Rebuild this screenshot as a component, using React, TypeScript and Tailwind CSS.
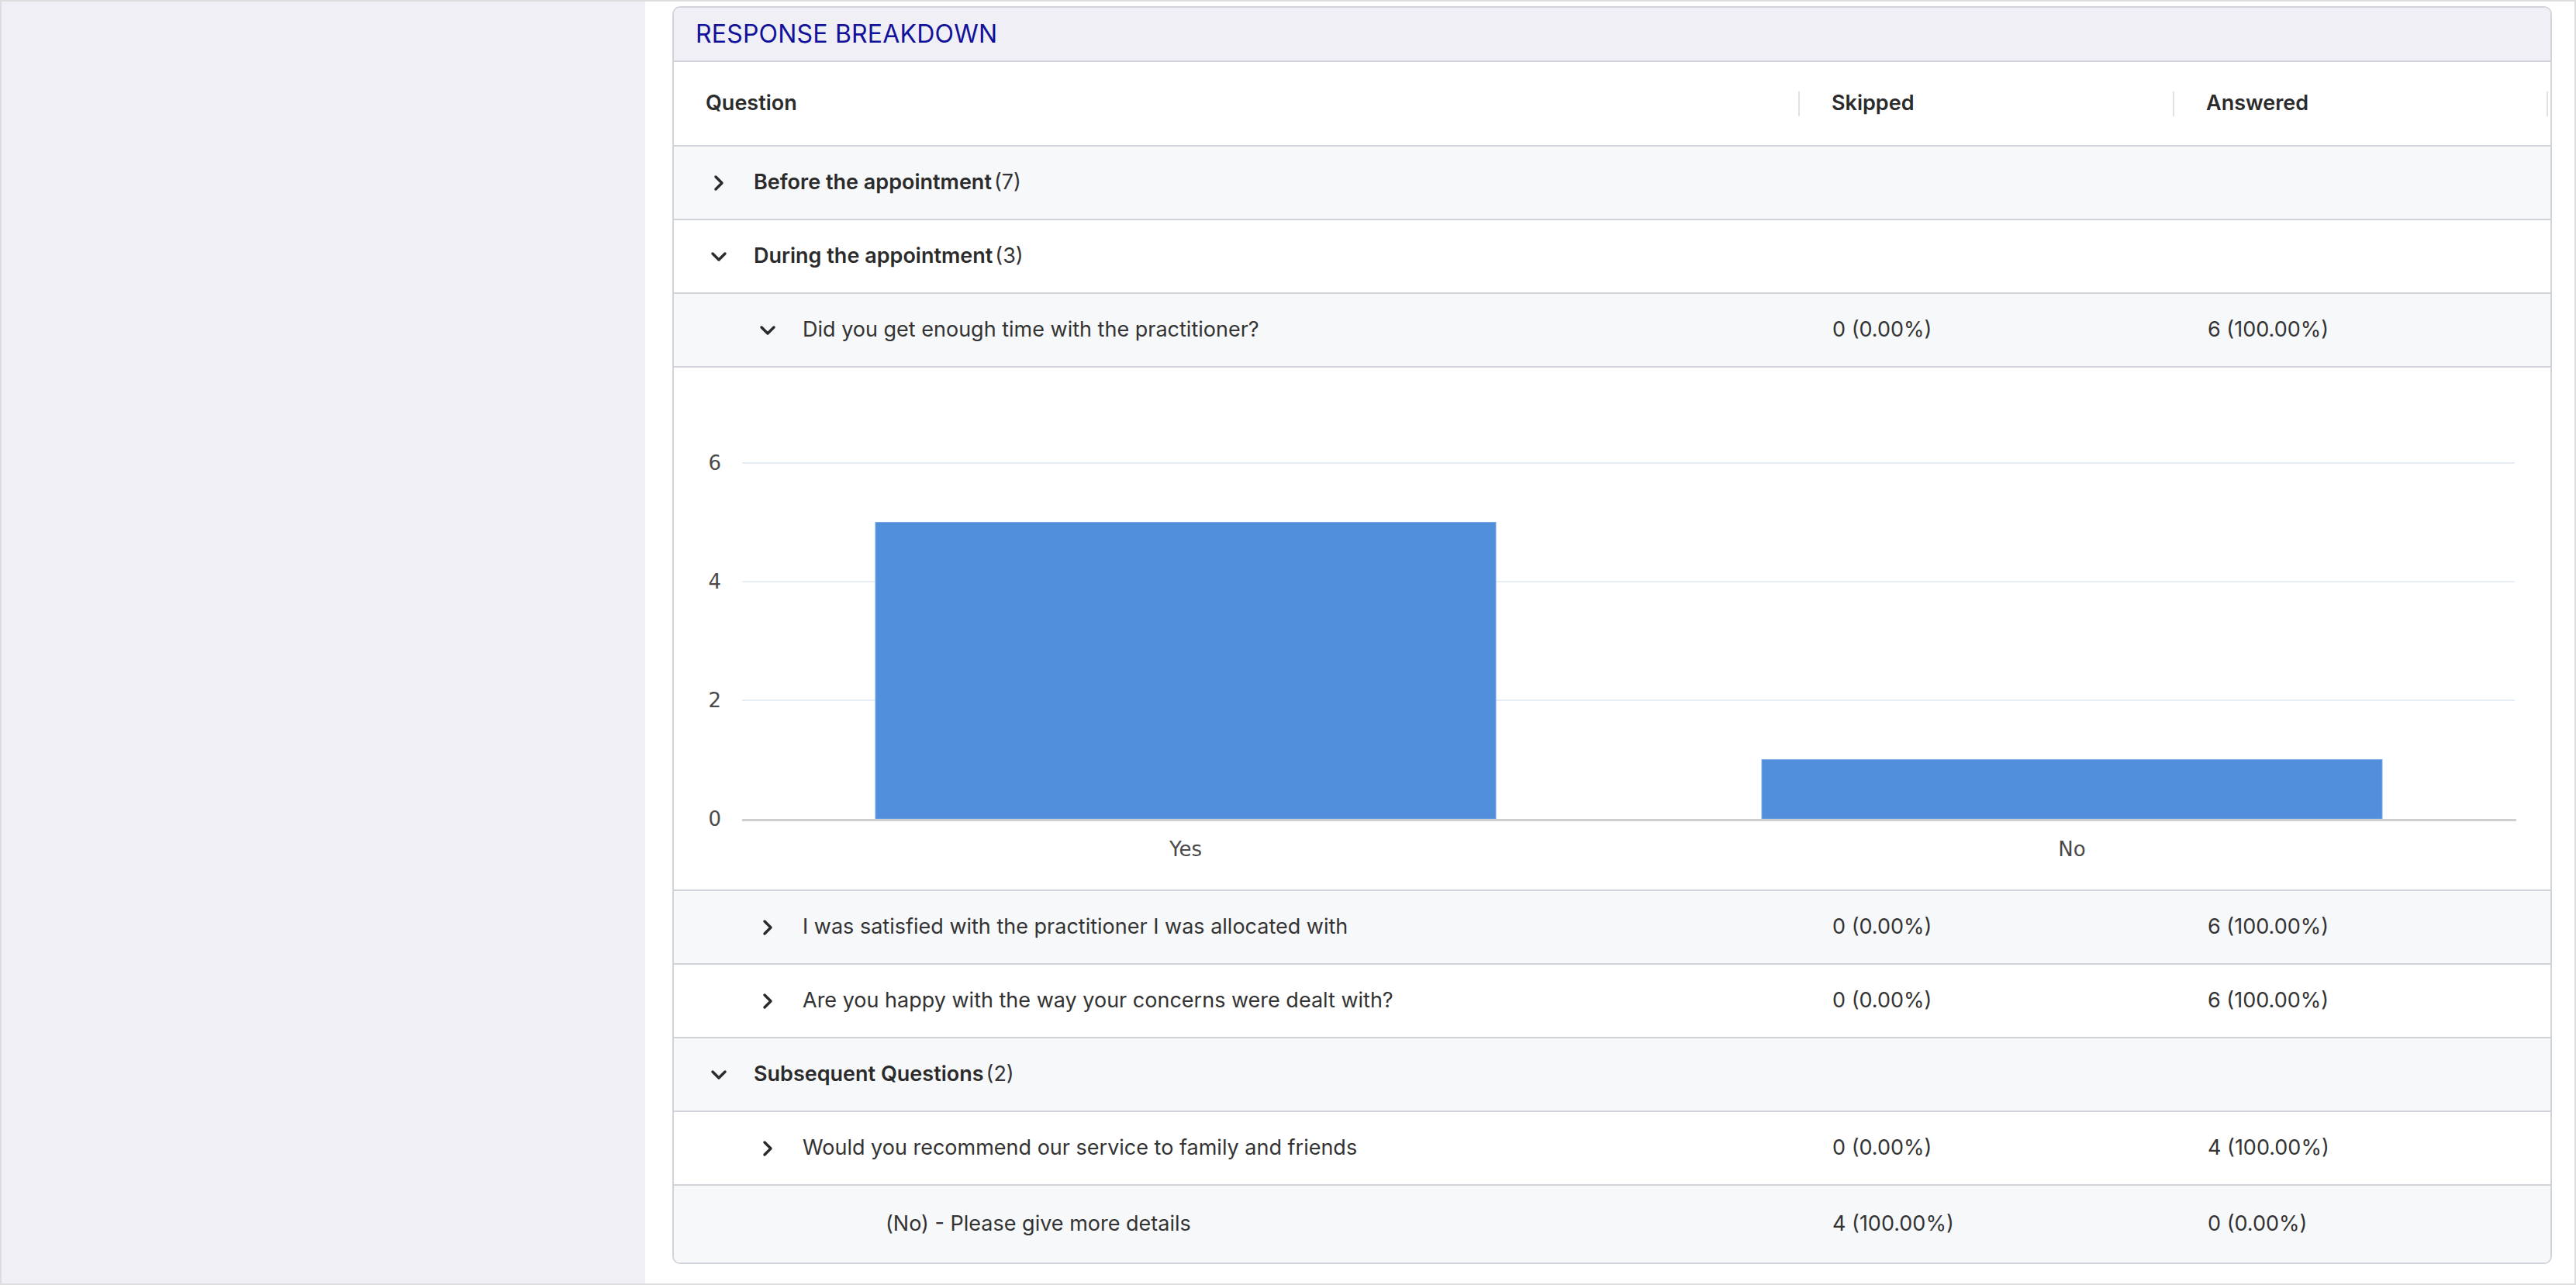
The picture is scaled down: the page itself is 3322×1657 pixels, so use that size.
import { ChevronDown, ChevronRight } from "lucide-react";

type Row = {
  label: string;
  count?: number;
  level: "group" | "question" | "detail";
  open?: boolean;
  skipped?: string;
  answered?: string;
  shaded: boolean;
  chart?: boolean;
  tall?: boolean;
};

const rows: Row[] = [
  { label: "Before the appointment", count: 7, level: "group", shaded: true },
  { label: "During the appointment", count: 3, level: "group", open: true, shaded: false },
  {
    label: "Did you get enough time with the practitioner?",
    level: "question",
    open: true,
    skipped: "0 (0.00%)",
    answered: "6 (100.00%)",
    shaded: true,
    chart: true,
  },
  {
    label: "I was satisfied with the practitioner I was allocated with",
    level: "question",
    skipped: "0 (0.00%)",
    answered: "6 (100.00%)",
    shaded: true,
  },
  {
    label: "Are you happy with the way your concerns were dealt with?",
    level: "question",
    skipped: "0 (0.00%)",
    answered: "6 (100.00%)",
    shaded: false,
  },
  { label: "Subsequent Questions", count: 2, level: "group", open: true, shaded: true },
  {
    label: "Would you recommend our service to family and friends",
    level: "question",
    skipped: "0 (0.00%)",
    answered: "4 (100.00%)",
    shaded: false,
  },
  {
    label: "(No) - Please give more details",
    level: "detail",
    skipped: "4 (100.00%)",
    answered: "0 (0.00%)",
    shaded: true,
    tall: true,
  },
];

const bars = [
  { label: "Yes", value: 5, x: 260 },
  { label: "No", value: 1, x: 1403 },
];

function BarChart() {
  const base = 582;
  const unit = 76.5;
  return (
    <svg viewBox="0 0 2420 673" className="block w-[2420px] h-[673px]">
      {[2, 4, 6].map((t) => (
        <line
          key={t}
          x1={88}
          x2={2374}
          y1={base - t * unit}
          y2={base - t * unit}
          stroke="#e6edf6"
          strokeWidth={2}
        />
      ))}
      {bars.map((b) => (
        <rect
          key={b.label}
          x={b.x}
          y={base - b.value * unit}
          width={800}
          height={b.value * unit}
          fill="#518fdd"
          stroke="#79a9e6"
          strokeWidth={1}
        />
      ))}
      <line x1={88} x2={2376} y1={base + 1.5} y2={base + 1.5} stroke="#cfcfcf" strokeWidth={3} />
      {[0, 2, 4, 6].map((t) => (
        <text
          key={t}
          x={61}
          y={base - t * unit + 9}
          textAnchor="end"
          fontSize={26}
          fill="#4a4a4a"
          fontFamily="'DejaVu Sans', sans-serif"
        >
          {t}
        </text>
      ))}
      {bars.map((b) => (
        <text
          key={b.label}
          x={b.x + 400}
          y={630}
          textAnchor="middle"
          fontSize={26}
          fill="#4a4a4a"
          fontFamily="'DejaVu Sans', sans-serif"
        >
          {b.label}
        </text>
      ))}
    </svg>
  );
}

function Toggle({ open }: { open?: boolean }) {
  return (
    <span className="flex w-[44px] shrink-0 items-center justify-center text-[#2b2b2b]">
      {open ? (
        <ChevronDown className="h-[32px] w-[32px]" strokeWidth={2.6} />
      ) : (
        <ChevronRight className="h-[32px] w-[32px]" strokeWidth={2.6} />
      )}
    </span>
  );
}

export default function App() {
  return (
    <div className="flex h-[1657px] w-[3322px] border-2 border-[#dedede] font-['Inter',sans-serif] text-[#333333]">
      <aside className="w-[830px] shrink-0 bg-[#f0eff5]" />

      <main className="flex-1 bg-white pl-[35px] pr-[29px] pt-[6px]">
        <section className="overflow-hidden rounded-[10px] border-2 border-[#d0d4da]">
          {/* Header */}
          <div className="flex h-[70px] items-center border-b-2 border-[#d0d4da] bg-[#f0eff5] pl-[28px]">
            <h2 className="text-[32px] tracking-[0.2px] text-[#12119a]">RESPONSE BREAKDOWN</h2>
          </div>

          {/* Column headings */}
          <div className="grid h-[109px] grid-cols-[1452px_483px_482px_1fr] border-b-2 border-[#d0d4da] text-[27px] font-semibold text-[#2b2b2b]">
            {["Question", "Skipped", "Answered"].map((h) => (
              <div key={h} className="flex items-center justify-between pl-[41px]">
                <span>{h}</span>
                <span className="h-[32px] w-[2px] bg-[#e2e2e2]" />
              </div>
            ))}
            <div />
          </div>

          {/* Rows */}
          {rows.map((r) => (
            <div key={r.label}>
              <div
                className={`grid grid-cols-[1452px_483px_482px_1fr] text-[27px] ${
                  r.tall ? "h-[99px]" : "h-[95px] border-b-2 border-[#d0d4da]"
                } ${r.shaded ? "bg-[#f7f8fa]" : "bg-white"}`}
              >
                <div
                  className={`flex items-center ${
                    r.level === "group"
                      ? "pl-[36px]"
                      : r.level === "question"
                      ? "pl-[99px]"
                      : "pl-[273px]"
                  }`}
                >
                  {r.level !== "detail" && <Toggle open={r.open} />}
                  {r.level === "group" ? (
                    <span className="ml-[23px]">
                      <span className="font-semibold text-[#2b2b2b]">{r.label}</span>
                      <span className="ml-[3px]">({r.count})</span>
                    </span>
                  ) : (
                    <span className={r.level === "question" ? "ml-[23px]" : ""}>{r.label}</span>
                  )}
                </div>
                <div className="flex items-center pl-[42px]">{r.skipped}</div>
                <div className="flex items-center pl-[43px]">{r.answered}</div>
                <div />
              </div>
              {r.chart && (
                <div className="h-[675px] border-b-2 border-[#d0d4da] bg-white">
                  <BarChart />
                </div>
              )}
            </div>
          ))}
        </section>
      </main>
    </div>
  );
}
